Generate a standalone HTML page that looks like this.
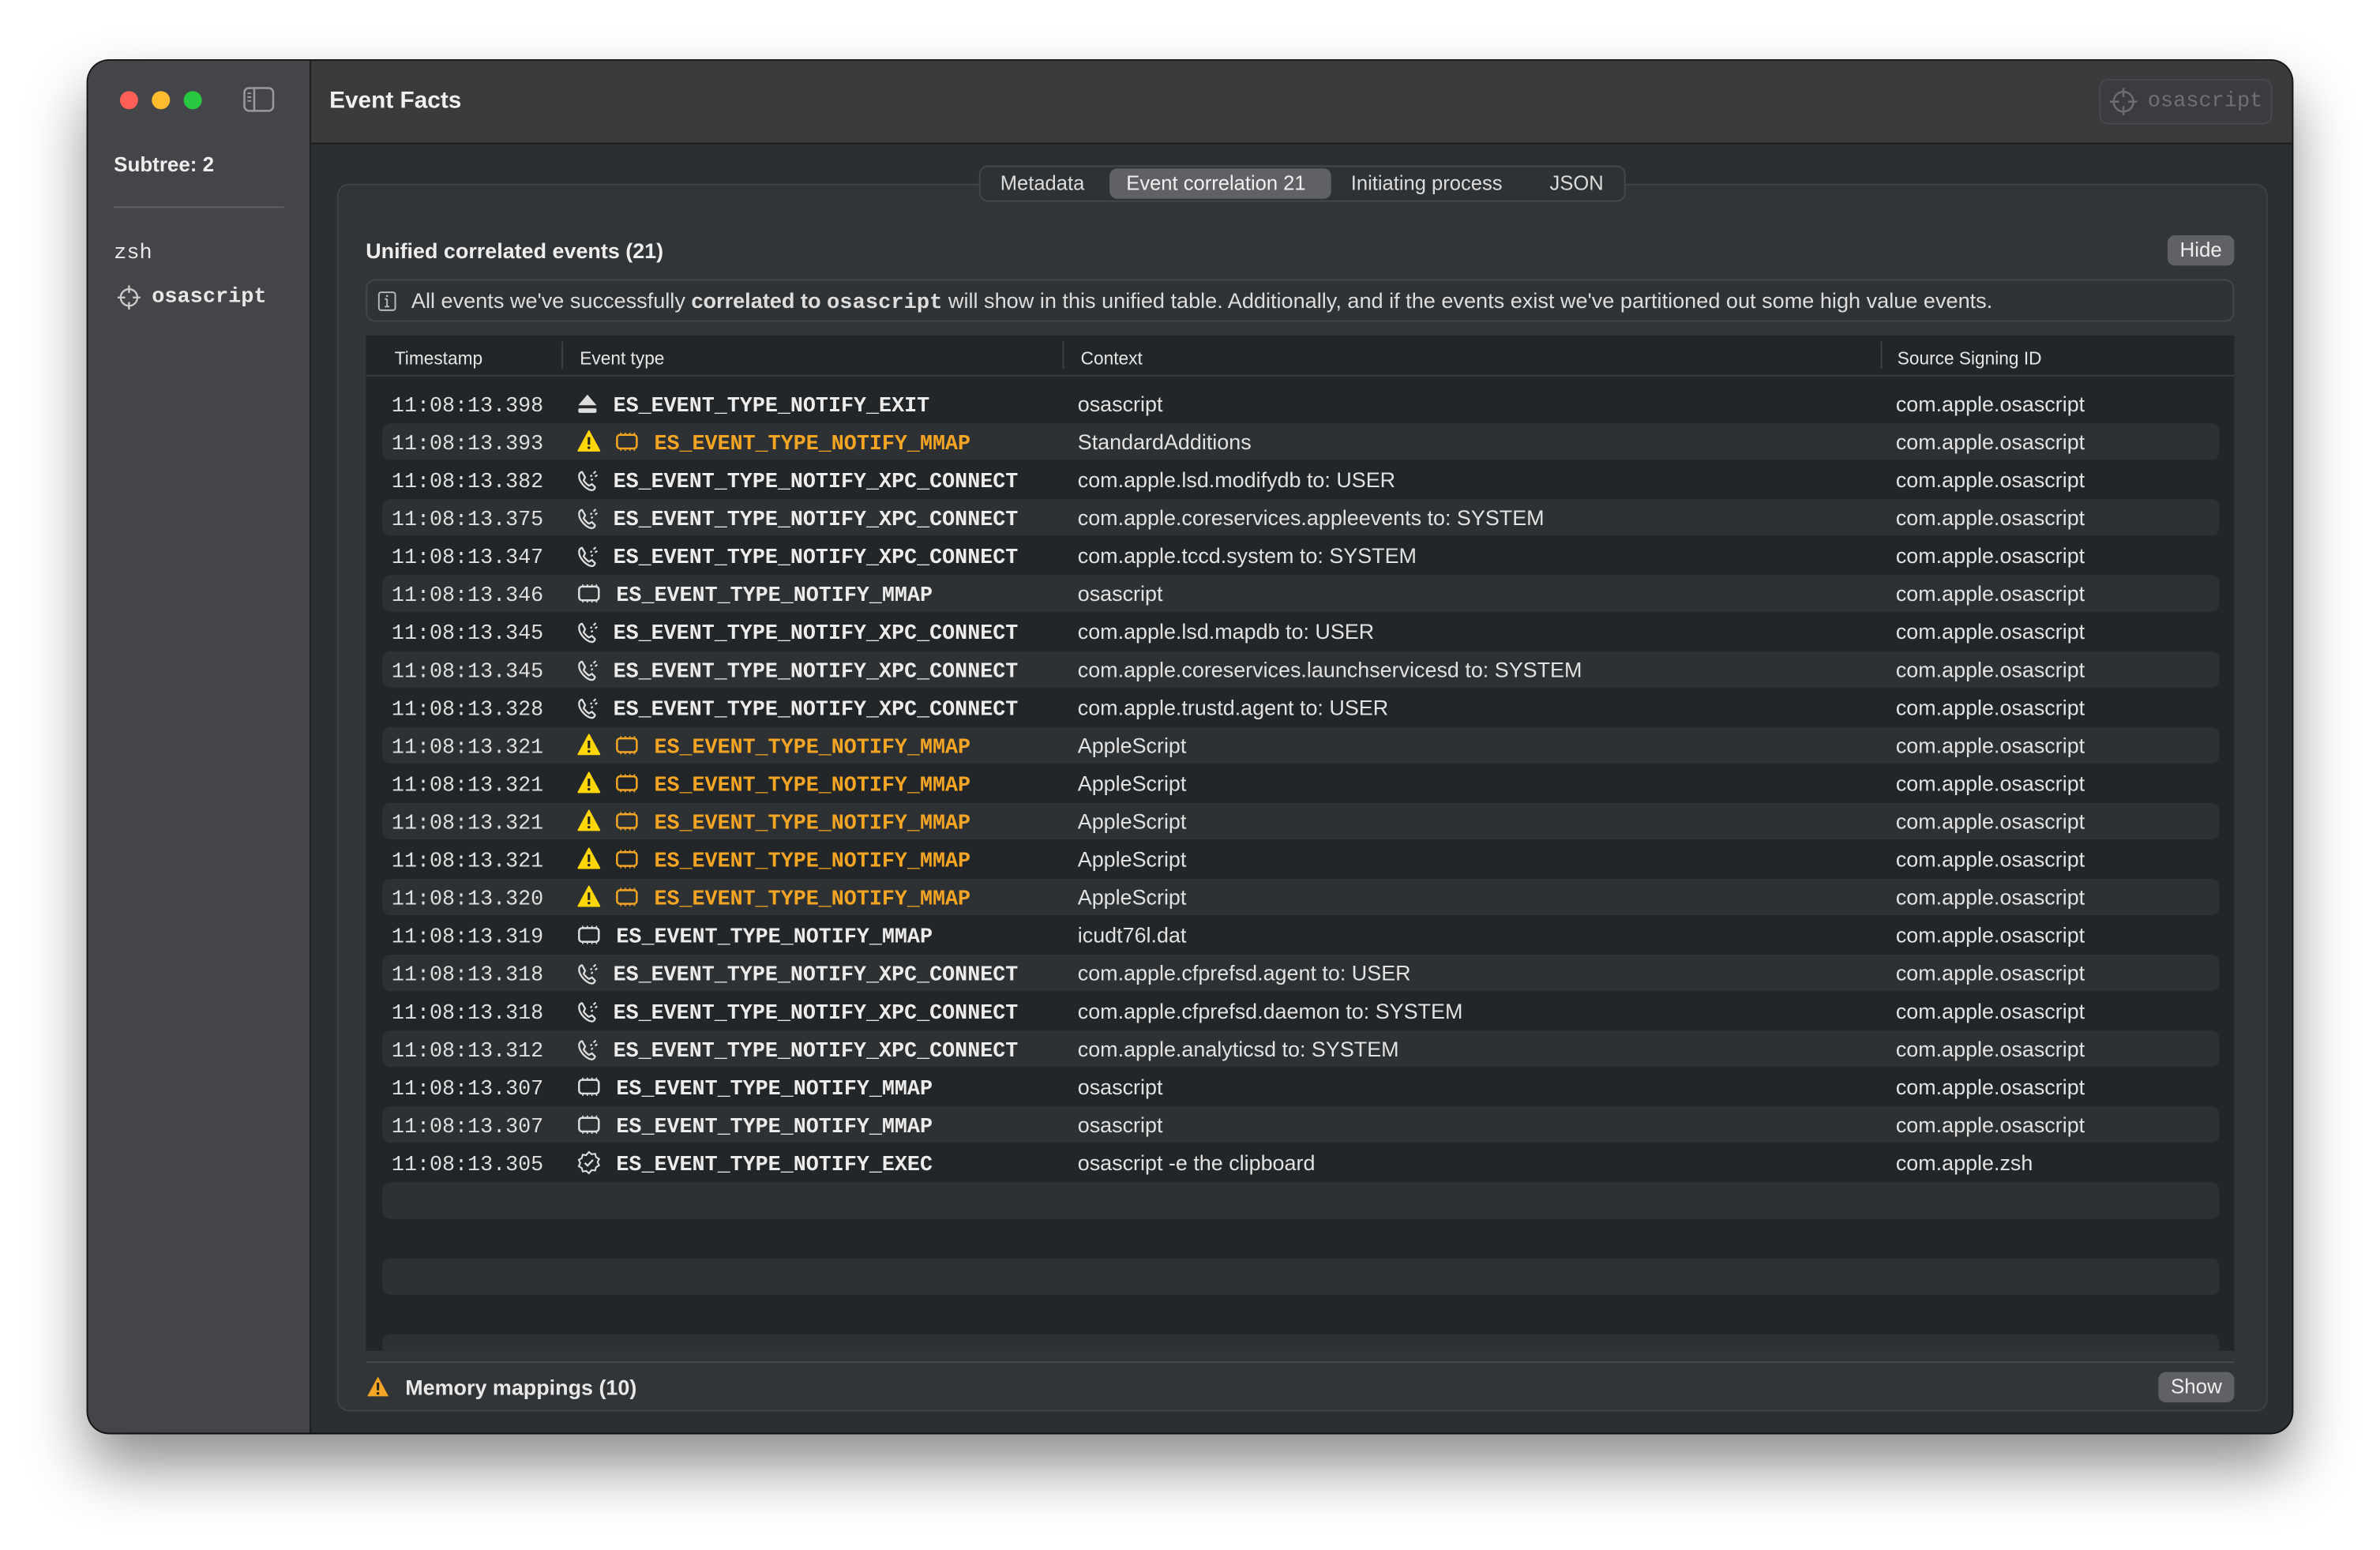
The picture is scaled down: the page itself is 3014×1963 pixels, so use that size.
<!DOCTYPE html>
<html><head><meta charset="utf-8">
<style>
html,body{margin:0;padding:0;background:#fff;width:3014px;height:1962px;overflow:hidden}
#s{position:absolute;left:0;top:0;width:1568px;height:1021px;transform:scale(1.92219);transform-origin:0 0;font-family:"Liberation Sans",sans-serif;color:#e2e2e3}
.win{position:absolute;left:58px;top:40px;width:1452px;height:904px;border-radius:14px;overflow:hidden;background:#2c2f31;box-shadow:0 22px 40px rgba(0,0,0,.45),0 0 0 1px #1a1a1a}
.side{position:absolute;left:0;top:0;width:146px;height:904px;background:#444548;border-right:1px solid #1c1c1c}
.title{position:absolute;left:147px;top:0;right:0;height:54px;background:#3a3b3d;border-bottom:1px solid #1c1c1e}
.dot{position:absolute;top:20px;width:12px;height:12px;border-radius:50%}
.mono{font-family:"Liberation Mono",monospace}
.panel{position:absolute;left:164px;top:81px;width:1270px;height:807px;background:#323538;border:1px solid #3f4245;border-radius:8px}
.tabs{position:absolute;left:587px;top:69px;width:424px;height:22px;background:#2f3234;border:1px solid #45484b;border-radius:6px;font-size:13.3px;color:#dcdcdc}
.tabs span{position:absolute;top:3px}
.tbl{position:absolute;left:183px;top:181px;width:1231px;height:669px;background:#232628;overflow:hidden}
.hdr{position:absolute;left:0;top:0;width:100%;height:26px;border-bottom:1px solid #3a3d40;font-size:11.8px;color:#e6e6e6}
.hdr span{position:absolute;top:8px}
.dv{position:absolute;top:4px;width:1px;height:18px;background:#3f4245}
.row{position:absolute;left:11px;width:1210px;height:24px;border-radius:5px}
.st{background:#2e3133}
.row span{position:absolute;top:6px;white-space:nowrap}
.row .ts{left:6px;font-family:"Liberation Mono",monospace;font-size:13.9px;color:#dfdfdf}
.row .et{left:152px;font-family:"Liberation Mono",monospace;font-weight:bold;font-size:13.9px;color:#ececec}
.row .em{left:154px}
.row .or{left:179px;color:#f5a524}
.row .cx{left:458px;font-size:14px;color:#e2e2e2;top:4px}
.row .sg{left:997px;font-size:14px;color:#e2e2e2;top:4px}
.row svg{position:absolute;left:128px;top:5px}
.row svg.m2{left:153px}
.btn{position:absolute;background:#5f6164;border-radius:5px;font-size:13.5px;color:#eee;text-align:center}
</style></head><body>
<svg width="0" height="0" style="position:absolute">
<defs>
<symbol id="exit" viewBox="0 0 14 14"><path d="M7 1L13 8H1Z" fill="#ddd"/><rect x="1" y="10" width="12" height="3" rx="1" fill="#ddd"/></symbol>
<symbol id="warn" viewBox="0 0 16 15"><path d="M8 1L15 14H1Z" fill="#ffd60a" stroke="#ffd60a" stroke-linejoin="round"/><path d="M8 5v5" stroke="#222" stroke-width="1.6"/><circle cx="8" cy="12" r=".9" fill="#222"/></symbol>
<symbol id="xpc" viewBox="0 0 15 15"><path d="M3 2c-2 1-2 4 0 7s5 5 7 5c1 0 2-1 2-2l-2-2-2 1c-1-.5-3-2.5-3.5-3.5l1-2-2-3.5z" fill="none" stroke="#ddd" stroke-width="1.2"/><path d="M9 5l1-1M11 3l1.5-1.5M9.5 7.5l1-1M12 5l1.5-1" stroke="#ddd" stroke-width="1.1"/></symbol>
<symbol id="mm" viewBox="0 0 16 14"><rect x="1.5" y="2.5" width="13" height="9" rx="2" fill="none" stroke="#ddd" stroke-width="1.3"/><path d="M4 1v1.5M7 1v1.5M10 1v1.5M13 1v1.5M4 11.5V13M7 11.5V13M10 11.5V13M13 11.5V13" stroke="#ddd" stroke-width=".8"/></symbol>
<symbol id="mmo" viewBox="0 0 16 14"><rect x="1.5" y="2.5" width="13" height="9" rx="2" fill="none" stroke="#f5a524" stroke-width="1.3"/><path d="M4 1v1.5M7 1v1.5M10 1v1.5M13 1v1.5M4 11.5V13M7 11.5V13M10 11.5V13M13 11.5V13" stroke="#f5a524" stroke-width=".8"/></symbol>
<symbol id="exec" viewBox="0 0 16 16"><path d="M8 1l1.8 1.5 2.3-.3.6 2.2 2 1.2-1 2.1 1 2.1-2 1.2-.6 2.2-2.3-.3L8 15l-1.8-1.5-2.3.3-.6-2.2-2-1.2 1-2.1-1-2.1 2-1.2.6-2.2 2.3.3z" fill="none" stroke="#ddd" stroke-width="1.1"/><path d="M5.3 8.2l1.8 1.8 3.6-3.8" fill="none" stroke="#ddd" stroke-width="1.2"/></symbol>
</defs></svg>
<div id="s">
<div class="win">
 <div class="side">
  <div class="dot" style="left:21px;background:#fe5f57"></div>
  <div class="dot" style="left:42px;background:#febc2e"></div>
  <div class="dot" style="left:63px;background:#28c840"></div>
  <svg style="position:absolute;left:102px;top:17px" width="21" height="17" viewBox="0 0 21 17"><rect x="1" y="1" width="19" height="15" rx="3" fill="none" stroke="#9a9a9c" stroke-width="1.3"/><line x1="7.5" y1="1" x2="7.5" y2="16" stroke="#9a9a9c" stroke-width="1.3"/><line x1="3" y1="4.5" x2="5.5" y2="4.5" stroke="#9a9a9c"/><line x1="3" y1="7" x2="5.5" y2="7" stroke="#9a9a9c"/><line x1="3" y1="9.5" x2="5.5" y2="9.5" stroke="#9a9a9c"/></svg>
  <div style="position:absolute;left:17px;top:61px;font-size:13.5px;font-weight:bold;color:#eee">Subtree: 2</div>
  <div style="position:absolute;left:17px;top:96px;width:112px;height:1px;background:#5f6063"></div>
  <div class="mono" style="position:absolute;left:17px;top:119px;font-size:14px;color:#e8e8e8">zsh</div>
  <svg style="position:absolute;left:19px;top:147px" width="16" height="18" viewBox="0 0 16 18"><circle cx="8" cy="9" r="5.5" fill="none" stroke="#ccc" stroke-width="1.2"/><path d="M8 1v5M8 12v5M0.5 9h5M10.5 9h5" stroke="#ccc" stroke-width="1.2"/></svg>
  <div class="mono" style="position:absolute;left:42px;top:148px;font-size:14px;font-weight:bold;color:#e8e8e8">osascript</div>
 </div>
 <div class="title">
  <div style="position:absolute;left:12px;top:18px;font-size:15.5px;font-weight:bold;color:#f0f0f0">Event Facts</div>
  <div style="position:absolute;right:13px;top:12px;width:112px;height:28px;border:1px solid #47494c;border-radius:6px;background:#3b3c3f">
   <svg style="position:absolute;left:5px;top:4px" width="20" height="20" viewBox="0 0 20 20"><circle cx="10" cy="10" r="6.5" fill="none" stroke="#6c6d70" stroke-width="1.3"/><path d="M10 1v6M10 13v6M1 10h6M13 10h6" stroke="#6c6d70" stroke-width="1.3"/></svg>
   <span class="mono" style="position:absolute;left:31px;top:6px;font-size:14px;color:#6f7073">osascript</span>
  </div>
 </div>
 <div class="panel"></div>
 <div class="tabs">
  <span style="left:13px">Metadata</span>
  <div style="position:absolute;left:85px;top:1px;width:146px;height:20px;background:#5f6164;border-radius:5px"></div>
  <span style="left:96px;color:#f0f0f0">Event correlation 21</span>
  <span style="left:244px">Initiating process</span>
  <span style="left:375px">JSON</span>
 </div>
 <div style="position:absolute;left:183px;top:117px;font-size:14px;font-weight:bold;color:#eee">Unified correlated events (21)</div>
 <div class="btn" style="left:1370px;top:115px;width:44px;height:20px;line-height:20px">Hide</div>
 <div style="position:absolute;left:183px;top:144px;width:1229px;height:26px;border:1px solid #44474a;border-radius:6px;background:#303336;color:#ddd">
  <svg style="position:absolute;left:7px;top:7px" width="12" height="13" viewBox="0 0 12 13"><rect x="0.6" y="0.6" width="10.8" height="11.8" rx="1.5" fill="none" stroke="#bbb" stroke-width="1"/><path d="M6 5v5M4.5 10h3M4.5 5h1.5" stroke="#bbb"/><circle cx="6" cy="3" r=".7" fill="#bbb"/></svg>
  <span style="position:absolute;left:29px;top:5px;white-space:nowrap;font-size:14.1px">All events we've successfully <b>correlated to <span class="mono">osascript</span></b> will show in this unified table. Additionally, and if the events exist we've partitioned out some high value events.</span>
 </div>
 <div class="tbl">
  <div class="hdr"><span style="left:19px">Timestamp</span><div class="dv" style="left:129px"></div><span style="left:141px">Event type</span><div class="dv" style="left:459px"></div><span style="left:471px">Context</span><div class="dv" style="left:998px"></div><span style="left:1009px">Source Signing ID</span></div>

  <div class="row" style="top:33px"><span class="ts">11:08:13.398</span><svg width="14" height="14"><use href="#exit"/></svg><span class="et">ES_EVENT_TYPE_NOTIFY_EXIT</span><span class="cx">osascript</span><span class="sg">com.apple.osascript</span></div>
  <div class="row st" style="top:58px"><span class="ts">11:08:13.393</span><svg width="16" height="15" style="top:4px"><use href="#warn"/></svg><svg class="m2" width="16" height="14"><use href="#mmo"/></svg><span class="et or">ES_EVENT_TYPE_NOTIFY_MMAP</span><span class="cx">StandardAdditions</span><span class="sg">com.apple.osascript</span></div>
  <div class="row" style="top:83px"><span class="ts">11:08:13.382</span><svg width="15" height="15"><use href="#xpc"/></svg><span class="et">ES_EVENT_TYPE_NOTIFY_XPC_CONNECT</span><span class="cx">com.apple.lsd.modifydb to: USER</span><span class="sg">com.apple.osascript</span></div>
  <div class="row st" style="top:108px"><span class="ts">11:08:13.375</span><svg width="15" height="15"><use href="#xpc"/></svg><span class="et">ES_EVENT_TYPE_NOTIFY_XPC_CONNECT</span><span class="cx">com.apple.coreservices.appleevents to: SYSTEM</span><span class="sg">com.apple.osascript</span></div>
  <div class="row" style="top:133px"><span class="ts">11:08:13.347</span><svg width="15" height="15"><use href="#xpc"/></svg><span class="et">ES_EVENT_TYPE_NOTIFY_XPC_CONNECT</span><span class="cx">com.apple.tccd.system to: SYSTEM</span><span class="sg">com.apple.osascript</span></div>
  <div class="row st" style="top:158px"><span class="ts">11:08:13.346</span><svg width="16" height="14"><use href="#mm"/></svg><span class="et em">ES_EVENT_TYPE_NOTIFY_MMAP</span><span class="cx">osascript</span><span class="sg">com.apple.osascript</span></div>
  <div class="row" style="top:183px"><span class="ts">11:08:13.345</span><svg width="15" height="15"><use href="#xpc"/></svg><span class="et">ES_EVENT_TYPE_NOTIFY_XPC_CONNECT</span><span class="cx">com.apple.lsd.mapdb to: USER</span><span class="sg">com.apple.osascript</span></div>
  <div class="row st" style="top:208px"><span class="ts">11:08:13.345</span><svg width="15" height="15"><use href="#xpc"/></svg><span class="et">ES_EVENT_TYPE_NOTIFY_XPC_CONNECT</span><span class="cx">com.apple.coreservices.launchservicesd to: SYSTEM</span><span class="sg">com.apple.osascript</span></div>
  <div class="row" style="top:233px"><span class="ts">11:08:13.328</span><svg width="15" height="15"><use href="#xpc"/></svg><span class="et">ES_EVENT_TYPE_NOTIFY_XPC_CONNECT</span><span class="cx">com.apple.trustd.agent to: USER</span><span class="sg">com.apple.osascript</span></div>
  <div class="row st" style="top:258px"><span class="ts">11:08:13.321</span><svg width="16" height="15" style="top:4px"><use href="#warn"/></svg><svg class="m2" width="16" height="14"><use href="#mmo"/></svg><span class="et or">ES_EVENT_TYPE_NOTIFY_MMAP</span><span class="cx">AppleScript</span><span class="sg">com.apple.osascript</span></div>
  <div class="row" style="top:283px"><span class="ts">11:08:13.321</span><svg width="16" height="15" style="top:4px"><use href="#warn"/></svg><svg class="m2" width="16" height="14"><use href="#mmo"/></svg><span class="et or">ES_EVENT_TYPE_NOTIFY_MMAP</span><span class="cx">AppleScript</span><span class="sg">com.apple.osascript</span></div>
  <div class="row st" style="top:308px"><span class="ts">11:08:13.321</span><svg width="16" height="15" style="top:4px"><use href="#warn"/></svg><svg class="m2" width="16" height="14"><use href="#mmo"/></svg><span class="et or">ES_EVENT_TYPE_NOTIFY_MMAP</span><span class="cx">AppleScript</span><span class="sg">com.apple.osascript</span></div>
  <div class="row" style="top:333px"><span class="ts">11:08:13.321</span><svg width="16" height="15" style="top:4px"><use href="#warn"/></svg><svg class="m2" width="16" height="14"><use href="#mmo"/></svg><span class="et or">ES_EVENT_TYPE_NOTIFY_MMAP</span><span class="cx">AppleScript</span><span class="sg">com.apple.osascript</span></div>
  <div class="row st" style="top:358px"><span class="ts">11:08:13.320</span><svg width="16" height="15" style="top:4px"><use href="#warn"/></svg><svg class="m2" width="16" height="14"><use href="#mmo"/></svg><span class="et or">ES_EVENT_TYPE_NOTIFY_MMAP</span><span class="cx">AppleScript</span><span class="sg">com.apple.osascript</span></div>
  <div class="row" style="top:383px"><span class="ts">11:08:13.319</span><svg width="16" height="14"><use href="#mm"/></svg><span class="et em">ES_EVENT_TYPE_NOTIFY_MMAP</span><span class="cx">icudt76l.dat</span><span class="sg">com.apple.osascript</span></div>
  <div class="row st" style="top:408px"><span class="ts">11:08:13.318</span><svg width="15" height="15"><use href="#xpc"/></svg><span class="et">ES_EVENT_TYPE_NOTIFY_XPC_CONNECT</span><span class="cx">com.apple.cfprefsd.agent to: USER</span><span class="sg">com.apple.osascript</span></div>
  <div class="row" style="top:433px"><span class="ts">11:08:13.318</span><svg width="15" height="15"><use href="#xpc"/></svg><span class="et">ES_EVENT_TYPE_NOTIFY_XPC_CONNECT</span><span class="cx">com.apple.cfprefsd.daemon to: SYSTEM</span><span class="sg">com.apple.osascript</span></div>
  <div class="row st" style="top:458px"><span class="ts">11:08:13.312</span><svg width="15" height="15"><use href="#xpc"/></svg><span class="et">ES_EVENT_TYPE_NOTIFY_XPC_CONNECT</span><span class="cx">com.apple.analyticsd to: SYSTEM</span><span class="sg">com.apple.osascript</span></div>
  <div class="row" style="top:483px"><span class="ts">11:08:13.307</span><svg width="16" height="14"><use href="#mm"/></svg><span class="et em">ES_EVENT_TYPE_NOTIFY_MMAP</span><span class="cx">osascript</span><span class="sg">com.apple.osascript</span></div>
  <div class="row st" style="top:508px"><span class="ts">11:08:13.307</span><svg width="16" height="14"><use href="#mm"/></svg><span class="et em">ES_EVENT_TYPE_NOTIFY_MMAP</span><span class="cx">osascript</span><span class="sg">com.apple.osascript</span></div>
  <div class="row" style="top:533px"><span class="ts">11:08:13.305</span><svg width="16" height="16" style="top:4px"><use href="#exec"/></svg><span class="et em">ES_EVENT_TYPE_NOTIFY_EXEC</span><span class="cx">osascript -e the clipboard</span><span class="sg">com.apple.zsh</span></div>
  <div class="row st" style="top:558px"></div>
  <div class="row st" style="top:608px"></div>
  <div class="row st" style="top:658px"></div>
 </div>
 <div style="position:absolute;left:183px;top:857px;width:1231px;height:1px;background:#46494c"></div>
 <svg style="position:absolute;left:183px;top:866px" width="16" height="15" viewBox="0 0 16 15"><path d="M8 1L15 14H1Z" fill="#f5a524"/><path d="M8 5v5" stroke="#222" stroke-width="1.6"/><circle cx="8" cy="12" r=".9" fill="#222"/></svg>
 <div style="position:absolute;left:209px;top:866px;font-size:14px;font-weight:bold;color:#e8e8e8">Memory mappings (10)</div>
 <div class="btn" style="left:1364px;top:864px;width:50px;height:20px;line-height:20px">Show</div>
</div>
</div></body></html>
